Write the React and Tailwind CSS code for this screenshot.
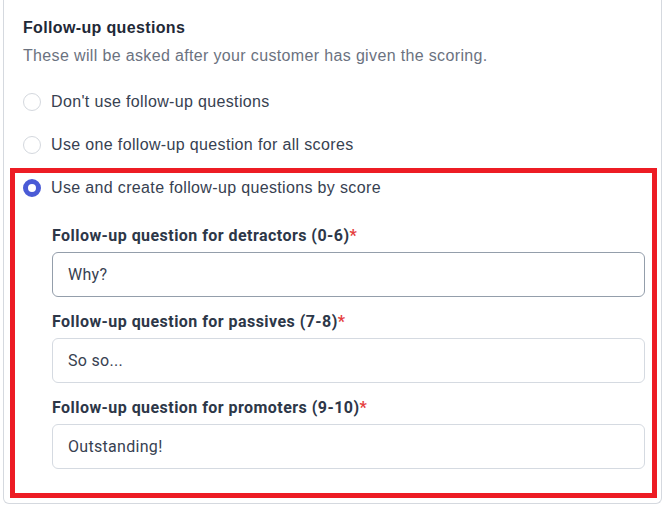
import React from "react";

function Radio({ checked, label }) {
  return (
    <div className="flex items-center gap-[10px] h-5">
      {checked ? (
        <span className="block w-[18px] h-[18px] rounded-full border-[5px] border-[#4a5bd6] bg-white shrink-0" />
      ) : (
        <span className="block w-[18px] h-[18px] rounded-full border border-[#d4d8de] bg-white shrink-0" />
      )}
      <span className="text-[16px] leading-5 tracking-[0.35px] text-[#374151] font-['Liberation_Sans',Arial,sans-serif]">
        {label}
      </span>
    </div>
  );
}

function Field({ label, value, focused, first }) {
  return (
    <div className={first ? "mt-[28px]" : "mt-[15px]"}>
      <div className="text-[16px] leading-5 tracking-[0.45px] font-bold text-[#2d3748] font-['Roboto',sans-serif]">
        {label}
        <span className="text-[#e53e3e]">*</span>
      </div>
      <div
        className={
          "mt-[6px] h-[45px] w-[593px] rounded-md border bg-white flex items-center pl-[15px] " +
          (focused ? "border-[#949eab]" : "border-[#d5dae1]")
        }
      >
        <span className="text-[16px] tracking-[0.3px] text-[#374151] font-['Roboto',sans-serif]">{value}</span>
      </div>
    </div>
  );
}

export default function App() {
  return (
    <div className="w-[664px] h-[508px] bg-white overflow-hidden">
      <div className="ml-[3px] w-[659px] border-x border-b border-[#d5d9df] rounded-b-md pt-[18px] pb-[5px]">
        <div className="pl-[19px]">
          <div className="text-[16px] leading-5 tracking-[0.35px] font-bold text-[#1f2937] font-['Liberation_Sans',Arial,sans-serif]">
            Follow-up questions
          </div>
          <div className="mt-2 text-[16px] leading-5 tracking-[0.35px] text-[#6b7280] font-['Liberation_Sans',Arial,sans-serif]">
            These will be asked after your customer has given the scoring.
          </div>
          <div className="mt-[26px]">
            <Radio label="Don't use follow-up questions" />
          </div>
          <div className="mt-[23px]">
            <Radio label="Use one follow-up question for all scores" />
          </div>
        </div>
        <div className="mt-[13px] ml-[6px] mr-[4px] border-[5px] border-[#ed1c24] pt-[5px] pb-[24px] pl-[8px]">
          <Radio checked label="Use and create follow-up questions by score" />
          <div className="pl-[29px]">
            <Field first focused label="Follow-up question for detractors (0-6)" value="Why?" />
            <Field label="Follow-up question for passives (7-8)" value="So so..." />
            <Field label="Follow-up question for promoters (9-10)" value="Outstanding!" />
          </div>
        </div>
      </div>
    </div>
  );
}
